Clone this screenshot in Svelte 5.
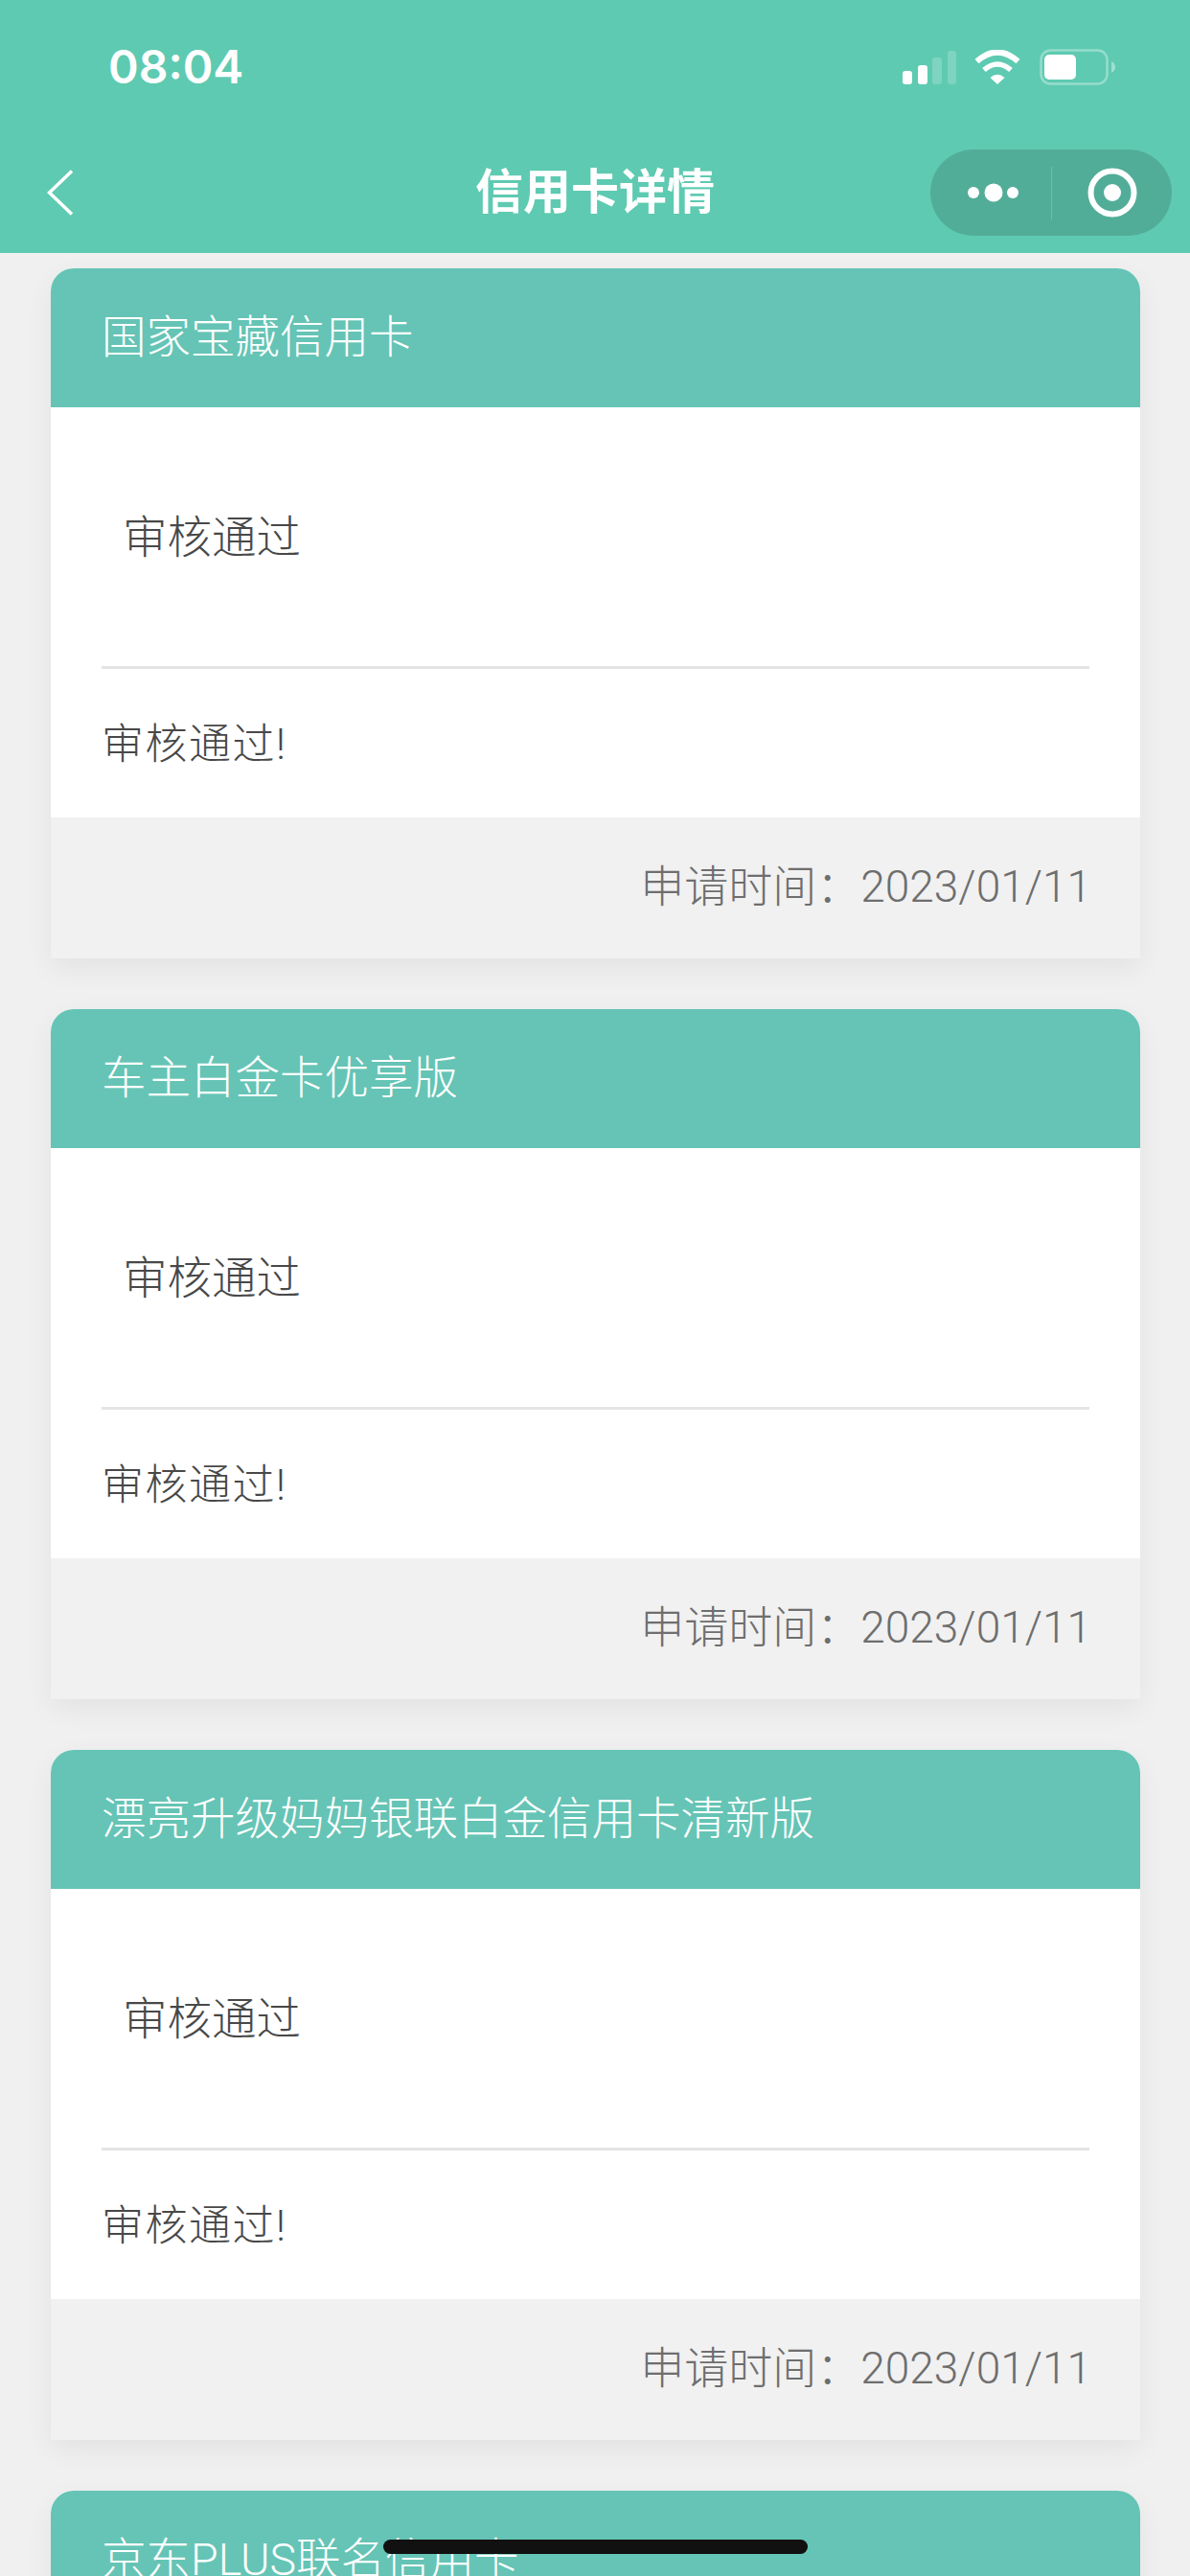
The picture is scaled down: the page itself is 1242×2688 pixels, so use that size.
<script>
  const cards = [
    { title: "国家宝藏信用卡" },
    { title: "车主白金卡优享版" },
    { title: "漂亮升级妈妈银联白金信用卡清新版" },
    { title: "京东PLUS联名信用卡" }
  ];
</script>

<div class="page">
  <header class="top">
    <div class="status">
      <span class="time">08:04</span>
      <div class="status-icons">
        <svg class="signal" width="56" height="35" viewBox="0 0 56 35">
          <rect x="0" y="21" width="10" height="14" rx="3" fill="#fff" />
          <rect x="16" y="15" width="10" height="20" rx="3" fill="#fff" />
          <rect x="31" y="7" width="10" height="28" rx="3" fill="#fff" opacity="0.2" />
          <rect x="47" y="0" width="9" height="35" rx="3" fill="#fff" opacity="0.2" />
        </svg>
        <svg class="wifi" width="48" height="36" viewBox="0 0 48 36">
          <path d="M2.5 12 Q24 -7 45.5 12" fill="none" stroke="#fff" stroke-width="6" />
          <path d="M10 21 Q24 9 38 21" fill="none" stroke="#fff" stroke-width="5.5" />
          <path d="M16.5 29 Q24 22.5 31.5 29 L24 36 Z" fill="#fff" />
        </svg>
        <svg class="battery" width="79" height="38" viewBox="0 0 79 38">
          <rect x="1.5" y="1.5" width="69" height="35" rx="10" fill="none" stroke="#fff" stroke-opacity="0.35" stroke-width="2.5" />
          <rect x="5" y="6" width="33" height="26" rx="5" fill="#fff" />
          <path d="M75 13 Q79 15 79 19 Q79 23 75 25 Z" fill="#fff" opacity="0.4" />
        </svg>
      </div>
    </div>
    <nav class="bar">
      <div class="bar-left">
        <svg width="28" height="48" viewBox="0 0 28 48">
          <path d="M26 1.5 L2.5 24 L26 46.5" fill="none" stroke="#fff" stroke-width="3.5" />
        </svg>
      </div>
      <h1>信用卡详情</h1>
      <div class="bar-right">
        <div class="capsule">
          <svg class="more" width="53" height="20" viewBox="0 0 53 20">
            <circle cx="6" cy="10" r="6" fill="#fff" />
            <circle cx="27" cy="10" r="9.5" fill="#fff" />
            <circle cx="47" cy="10" r="6" fill="#fff" />
          </svg>
          <span class="divider"></span>
          <svg class="target" width="52" height="52" viewBox="0 0 52 52">
            <circle cx="26" cy="26" r="22.5" fill="none" stroke="#fff" stroke-width="6" />
            <circle cx="26" cy="26" r="9" fill="#fff" />
          </svg>
        </div>
      </div>
    </nav>
  </header>

  <main class="list">
    {#each cards as card}
      <section class="card">
        <div class="card-head">{card.title}</div>
        <div class="card-status">审核通过</div>
        <div class="card-line"></div>
        <div class="card-msg">审核通过!</div>
        <div class="card-foot">申请时间：2023/01/11</div>
      </section>
    {/each}
  </main>

  <div class="home-bar"></div>
</div>

<style>
  :global(body) {
    margin: 0;
    background: #f0f0f0;
  }

  .page {
    position: relative;
    width: 1242px;
    height: 2688px;
    overflow: hidden;
    background: #f0f0f0;
    font-family: Roboto, "Noto Sans CJK SC", sans-serif;
    font-weight: 300;
  }

  .top {
    height: 264px;
    background: #5ecab1;
    color: #fff;
  }

  .status {
    height: 138px;
    display: flex;
    align-items: center;
    justify-content: space-between;
    padding: 2px 78px 0 113px;
    box-sizing: border-box;
  }

  .time {
    font-family: Inter, "Liberation Sans", sans-serif;
    font-size: 48px;
    font-weight: 600;
    line-height: 1;
  }

  .status-icons {
    display: flex;
    align-items: center;
  }

  .signal {
    margin-right: 19px;
    margin-top: 1px;
  }

  .wifi {
    margin-right: 20px;
  }

  .bar {
    height: 126px;
    display: grid;
    grid-template-columns: 1fr auto 1fr;
    align-items: center;
  }

  .bar-left {
    display: flex;
    padding-left: 49px;
  }

  h1 {
    margin: 0;
    font-size: 50px;
    font-weight: 700;
    line-height: 1;
  }

  .bar-right {
    display: flex;
    justify-content: flex-end;
    padding-right: 19px;
  }

  .capsule {
    width: 252px;
    height: 90px;
    border-radius: 45px;
    background: #52ad98;
    display: flex;
    align-items: center;
    box-sizing: border-box;
    padding-left: 39px;
  }

  .divider {
    width: 1px;
    height: 55px;
    margin-left: 34px;
    margin-right: 37px;
    background: rgba(255, 255, 255, 0.18);
  }

  .list {
    display: flex;
    flex-direction: column;
    gap: 53px;
    padding: 15.5px 52px 0 53px;
  }

  .card {
    flex: none;
    background: #fff;
    border-radius: 24px 24px 0 0;
    box-shadow: 0 10px 30px rgba(0, 0, 0, 0.06);
  }

  .card-head {
    height: 145px;
    box-sizing: border-box;
    padding: 0 0 9px 53px;
    display: flex;
    align-items: center;
    border-radius: 24px 24px 0 0;
    background: #65c4b5;
    color: #fff;
    font-size: 46.5px;
  }

  .card-status {
    height: 270px;
    box-sizing: border-box;
    padding: 0 0 6px 75px;
    display: flex;
    align-items: center;
    color: #484848;
    font-size: 46.5px;
  }

  .card-line {
    height: 3px;
    margin: 0 53px;
    background: #e4e4e4;
  }

  .card-msg {
    height: 155px;
    box-sizing: border-box;
    padding: 0 0 5px 53px;
    display: flex;
    align-items: center;
    color: #484848;
    font-size: 44px;
    letter-spacing: 1.5px;
  }

  .card-foot {
    height: 147px;
    box-sizing: border-box;
    padding: 0 51px 10px 0;
    display: flex;
    align-items: center;
    justify-content: flex-end;
    background: #f1f1f1;
    color: #6e6e6e;
    font-size: 46px;
  }

  .home-bar {
    position: absolute;
    left: 400px;
    top: 2650px;
    width: 443px;
    height: 15px;
    border-radius: 8px;
    background: #111;
  }
</style>
